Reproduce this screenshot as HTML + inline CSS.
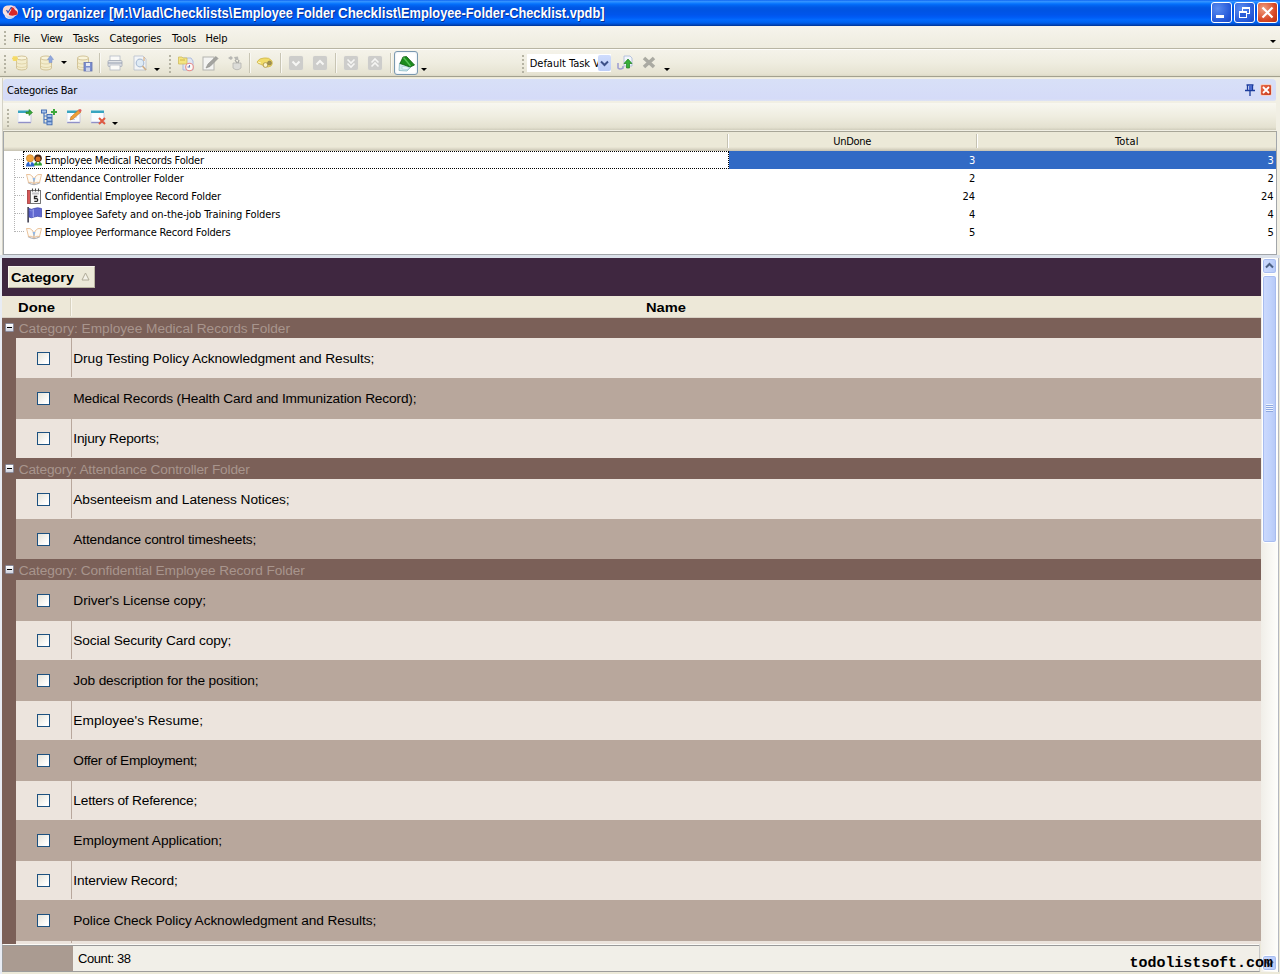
<!DOCTYPE html>
<html><head><meta charset="utf-8"><title>Vip organizer</title>
<style>
*{box-sizing:border-box;margin:0;padding:0}
html,body{width:1280px;height:974px;overflow:hidden;background:#ece9d8}
body{position:relative;font-family:"Liberation Sans",sans-serif;font-size:11px;color:#000}
.abs{position:absolute}
i{display:block;position:absolute;font-style:normal}
.t{position:absolute;white-space:pre;line-height:normal}
svg{position:absolute;overflow:visible}
/* title bar */
#title{left:0;top:0;width:1280px;height:26px;background:linear-gradient(#0058ee 0%,#3a93ff 4%,#288eff 8%,#127dff 12%,#036ffc 16%,#0262ee 22%,#0057e5 30%,#0054e3 40%,#0055eb 56%,#005bf5 66%,#026afe 76%,#0062ef 86%,#0052d6 92%,#0040ab 97%,#003092 100%)}
.wbtn{top:2px;width:21px;height:21px;border:1px solid #fff;border-radius:3px;background:radial-gradient(circle at 30% 30%,#5a8cf0,#2458d8 70%,#1c48c0)}
.wbtn.close{background:radial-gradient(circle at 30% 30%,#f0a080,#d84a28 60%,#b83010)}
/* menu */
#menu{left:0;top:26px;width:1280px;height:23px;background:linear-gradient(#f6f4ec,#eeecdf);border-bottom:1px solid #b8b5a4}
.grip{width:2px;background-image:repeating-linear-gradient(#b5b3a3 0 2px,transparent 2px 4px)}
#tb{left:0;top:49px;width:1280px;height:28px;background:linear-gradient(#fdfdfa 0,#fdfdfa 1px,#f5f3ea 1px,#efede0 50%,#e6e3d2 92%,#dcd9c6);border-bottom:1px solid #a3a18f}
.sep{width:2px;height:20px;top:53px;border-left:1px solid #c8c5b4;border-right:1px solid #f9f8f3}
.dd{width:0;height:0;border:3px solid transparent;border-top:3px solid #000;border-bottom:none}
.gb{width:14px;height:14px;top:56px;background:#cdcdcb;border-radius:2px;box-shadow:0 0 1px #dadad6}
/* cat bar */
#catpanel{left:0;top:78px;width:1280px;height:180px;background:#f1efe4;border-left:2px solid #f6f5ef;box-shadow:inset 1px 0 0 #d4d2c6}
#cathead{left:3px;top:79px;width:1273px;height:22px;background:linear-gradient(#d8e0f7,#d5dbf8 90%,#dfe3f2);border-radius:4px 4px 2px 2px}
#cattb{left:3px;top:103px;width:1273px;height:27px;background:linear-gradient(#f8f7f0,#efede0 50%,#e4e1d0 90%,#d0cdbc)}
#tree{left:3px;top:131px;width:1274px;height:124px;background:#fff;border:1px solid #a2a6aa;border-top-color:#a8a698}
#thead{left:4px;top:132px;width:1272px;height:19px;background:linear-gradient(#ece9d8 0,#ece9d8 78%,#e0dccb 86%,#d2cebd 93%,#c6c2b2 100%)}
#thead2{left:4px;top:150px;width:1272px;height:1px;background:#e6e3d4}
.tsep{top:134px;width:2px;height:14px;border-left:1px solid #c5c2b2;border-right:1px solid #fff}
.trow{position:absolute;left:4px;width:1272px;height:18px}
.trow .dots{left:11px;top:8px;width:9px;height:1px;background-image:repeating-linear-gradient(90deg,#b4b4b4 0 1px,transparent 1px 2px)}
.trow .ti{position:absolute}
#selbg{left:729px;top:151px;width:547px;height:18px;background:#316ac5}
#focus{left:23px;top:151px;width:706px;height:18px;border:1px dotted #000}
#vdots{left:14px;top:159px;width:1px;height:73px;background-image:repeating-linear-gradient(#b4b4b4 0 1px,transparent 1px 2px)}
#gap{left:0;top:255px;width:1280px;height:3px;background:#dbe1ea}
/* grid */
#lb{left:0;top:258px;width:2px;height:716px;background:#e8ecf4}
#gridbg{left:2px;top:258px;width:1259px;height:686px;background:#7b6058}
#purple{left:2px;top:258px;width:1259px;height:38px;background:#3f2740}
#catbtn{left:8px;top:266px;width:87px;height:22px;background:#ece9d8;border:1px solid #f8f6ee;border-right-color:#b8b4a0;border-bottom-color:#b8b4a0}
#ghead{left:2px;top:296px;width:1259px;height:22px;background:#ede8d8;border-bottom:1px solid #d8d0c4}
.grp{position:absolute;left:2px;width:1259px;height:20px;background:#7b6058}
.minus{left:3px;top:5px;width:9px;height:9px;background:linear-gradient(#fff,#d0d4e0);border:1px solid #8a8a9a;border-radius:1px}
.minus:after{content:"";position:absolute;left:1px;top:3px;width:5px;height:1px;background:#000}
.row{position:absolute;left:16px;width:1245px;height:40px}
.row.L{background:#ece4dd;border-top:1px solid #b8a79c}
.row.D{background:#b8a79c}
.row.L:before{content:"";position:absolute;left:55px;top:-1px;width:1px;height:100%;background:#b8a79c}
.row.L .cb{top:13px}
.row.L.first{border-top-color:#ece4dd}
.cb{left:21px;top:14px;width:13px;height:13px;border:1px solid #1c5180;background:linear-gradient(135deg,#e4e2d8,#fff 80%)}
#foot{left:2px;top:944px;width:1258px;height:28px;background:#f1efe8;border-top:1px solid #fbfaf6;border-bottom:1px solid #9c9c9c;border-left:1px solid #9c9c9c;border-right:1px solid #c8c8c8;box-shadow:inset 0 1px 0 #9a9a9a}
#footl{left:3px;top:946px;width:70px;height:25px;background:#aa9b91}
/* scrollbar */
#sb{left:1261px;top:258px;width:18px;height:714px;background:linear-gradient(90deg,#f0eee8,#fefefb);border-right:1px solid #b4b8c0}
.sbb{left:1262px;width:15px;background:linear-gradient(90deg,#cddafd,#c0d2fc 60%,#b6c8f6);border:1px solid #fff;border-radius:3px;box-shadow:inset 0 0 0 1px #a8bdf0}
</style></head><body>
<div id="title" class="abs">
<svg style="left:2px;top:4px" width="17" height="16" viewBox="0 0 17 16"><path d="M1 5 Q2 1 7 1.500 Q11 0.500 12 3 Q16 4 16 8 Q16 11 13 12 Q11 15 7 15 Q3 14.500 2.500 11 Q0 9 1 5Z" fill="#f6e4e6"/><path d="M2 4 Q4 1.500 8 2 L6 9 Q3 9 1.500 7Z" fill="#fbd8cc"/><path d="M9 3 Q10 6 8 8 Q6 10 7 11 Q11 12.500 15.500 10.500 Q16 7 13 6 Q12 3 9 3Z" fill="#d82828"/><path d="M11 2.500 Q13 2 13.500 4.500" stroke="#f0b0c0" stroke-width="1.200" fill="none"/><path d="M4 11 Q8 13.500 13 12 Q11 15 7 14.800 Q4.500 14 4 11Z" fill="#c4d4f0"/><path d="M4.500 6 L6 8.500 L9.500 3" stroke="#3450b8" stroke-width="1.200" fill="none"/></svg>
<div class="abs wbtn" style="left:1211px"><i style="left:4px;top:12px;width:8px;height:3px;background:#fff"></i></div>
<div class="abs wbtn" style="left:1234px"><i style="left:7px;top:4px;width:8px;height:7px;border:1px solid #fff;border-top-width:2px"></i><i style="left:4px;top:8px;width:8px;height:7px;border:1px solid #fff;border-top-width:2px;background:#2a5cd8"></i></div>
<div class="abs wbtn close" style="left:1257px"><svg style="left:3px;top:3px" width="13" height="13" viewBox="0 0 13 13"><path d="M1.500 1.500 L11.500 11.500 M11.500 1.500 L1.500 11.500" stroke="#fff" stroke-width="2.200"/></svg></div></div>
<div id="menu" class="abs"></div>
<i class="grip" style="left:4px;top:31px;height:14px"></i>
<i class="dd" style="left:1270px;top:40px"></i>
<div id="tb" class="abs"></div>
<i class="grip" style="left:4px;top:55px;height:18px"></i>
<svg style="left:12px;top:55px;opacity:0.8" width="16" height="16" viewBox="0 0 16 16" ><g opacity="1"><path d="M4.5 3 V13 A5.25 2 0 0 0 15 13 V3Z" fill="#f5edc9" stroke="#ccba88" stroke-width="1"/><ellipse cx="9.75" cy="3" rx="5.25" ry="2" fill="#fbf6da" stroke="#ccba88" stroke-width="1"/><path d="M4.5 7 A5.25 2 0 0 0 15 7 M4.5 10.5 A5.25 2 0 0 0 15 10.5" fill="none" stroke="#d8c890" stroke-width="0.8"/></g><path d="M0 3.500 h6 M3 1 v5 M1 1.500 l4 4 M5 1.500 l-4 4" stroke="#f6d648" stroke-width="1.300"/></svg>
<svg style="left:38px;top:55px;opacity:0.8" width="16" height="16" viewBox="0 0 16 16" ><g opacity="1"><path d="M2.5 3 V13 A5.5 2 0 0 0 13.5 13 V3Z" fill="#f5edc9" stroke="#ccba88" stroke-width="1"/><ellipse cx="8.0" cy="3" rx="5.5" ry="2" fill="#fbf6da" stroke="#ccba88" stroke-width="1"/><path d="M2.5 7 A5.5 2 0 0 0 13.5 7 M2.5 10.5 A5.5 2 0 0 0 13.5 10.5" fill="none" stroke="#d8c890" stroke-width="0.8"/></g><path d="M12.500 0.500 L15.500 4.500 H14 V7.500 H11 V4.500 H9.500Z" fill="#7896dc" stroke="#5876c4" stroke-width="0.500"/></svg>
<i class="dd" style="left:61px;top:61px"></i>
<svg style="left:76px;top:55px;opacity:0.8" width="17" height="17" viewBox="0 0 17 17" ><g opacity="1"><path d="M1.5 3 V13 A5.5 2 0 0 0 12.5 13 V3Z" fill="#f5edc9" stroke="#ccba88" stroke-width="1"/><ellipse cx="7.0" cy="3" rx="5.5" ry="2" fill="#fbf6da" stroke="#ccba88" stroke-width="1"/><path d="M1.5 7 A5.5 2 0 0 0 12.5 7 M1.5 10.5 A5.5 2 0 0 0 12.5 10.5" fill="none" stroke="#d8c890" stroke-width="0.8"/></g><rect x="8" y="7.500" width="8" height="8.500" fill="#6078cc" stroke="#4658a8" stroke-width="0.800"/><rect x="10" y="8" width="4" height="3" fill="#e8ecf8"/><rect x="10" y="12.500" width="4" height="3.500" fill="#c8d0ec"/></svg>
<i class="sep" style="left:99px"></i>
<svg style="left:107px;top:55px;opacity:0.8" width="16" height="16" viewBox="0 0 16 16" ><rect x="3" y="1" width="10" height="5" fill="#fdfdfd" stroke="#a8b0c0" stroke-width="0.800"/><rect x="1" y="5.500" width="14" height="6" rx="1" fill="#dfe3ea" stroke="#8f98ac" stroke-width="0.800"/><path d="M1 8 H15" stroke="#7f8aa4" stroke-width="1"/><rect x="3" y="10" width="10" height="5" fill="#fff" stroke="#a8b0c0" stroke-width="0.800"/></svg>
<svg style="left:132px;top:55px;opacity:0.8" width="16" height="16" viewBox="0 0 16 16" ><path d="M2 1 H11 L14 4 V15 H2Z" fill="#f4f7fc" stroke="#aab4c8" stroke-width="0.800"/><circle cx="8" cy="8" r="3.800" fill="#dcebfa" stroke="#9db4d4" stroke-width="1.200"/><path d="M10.500 11 L14 15" stroke="#c8a070" stroke-width="1.600"/><path d="M12 2 v4" stroke="#d09050" stroke-width="1"/></svg>
<i class="dd" style="left:154px;top:68px"></i>
<i class="grip" style="left:169px;top:55px;height:18px"></i>
<svg style="left:178px;top:55px;opacity:0.8" width="17" height="17" viewBox="0 0 17 17" ><path d="M5 3 H13 L15 6 V15 H5Z" fill="#dfe6f8" stroke="#8ea2d8" stroke-width="0.800"/><path d="M0.500 2 H4 L5 3 H9 V9 H0.500Z" fill="#f6e36a" stroke="#c8b040" stroke-width="0.800"/><path d="M2 5 h5" stroke="#c8a820" stroke-width="1"/><circle cx="11.500" cy="12" r="3.800" fill="#fff" stroke="#e87474" stroke-width="1.100"/><path d="M11.500 10 V12 H9.500" stroke="#5060b0" stroke-width="1.100" fill="none"/></svg>
<svg style="left:202px;top:55px;opacity:1" width="17" height="17" viewBox="0 0 17 17" ><rect x="1" y="2" width="11" height="13" fill="#f4f4f2" stroke="#b4b4b0" stroke-width="1"/><path d="M4 13 L6 9 L14 1.500 L16 3.500 L8 11.500Z" fill="#a4a4a0" stroke="#8c8c88" stroke-width="0.600"/></svg>
<svg style="left:226px;top:55px;opacity:1" width="17" height="17" viewBox="0 0 17 17" ><path d="M2 3 L5 1 L7 3 L5 5Z M8 2 L12 1.500 L12.500 5 L9.500 5Z" fill="#b8b8b4"/><path d="M7 8 H15 V13 Q11 16.500 7 13Z" fill="#dcdcd8" stroke="#b4b4b0" stroke-width="0.800"/><path d="M9 5 L11 8 M13 5 L12 8" stroke="#a8a8a4" stroke-width="1.300"/></svg>
<i class="sep" style="left:249px"></i>
<svg style="left:256px;top:55px;opacity:0.8" width="18" height="16" viewBox="0 0 18 16" ><path d="M1 7 Q3 3 8 3 Q13 2 16 6 Q17 9 15 11 Q12 13 9 11 Q6 10 4 9 Q2 9 1 7Z" fill="#f2d84a" stroke="#c8a828" stroke-width="0.800"/><circle cx="9.500" cy="10" r="2.400" fill="#fdf6c8" stroke="#a88c28" stroke-width="1"/><circle cx="13.500" cy="8" r="2" fill="#8c7a30" stroke="#6c5c20" stroke-width="0.600"/><path d="M2 7 L5 8" stroke="#fff8c0" stroke-width="1"/></svg>
<i class="sep" style="left:280px"></i>
<i class="gb" style="left:289px"><svg style="left:0px;top:0px;opacity:1" width="14" height="14" viewBox="0 0 14 14" ><path d="M3.500 5.500 L7 9 L10.500 5.500" stroke="#f6f6f4" stroke-width="2" fill="none"/></svg></i>
<i class="gb" style="left:313px"><svg style="left:0px;top:0px;opacity:1" width="14" height="14" viewBox="0 0 14 14" ><path d="M3.500 8.500 L7 5 L10.500 8.500" stroke="#f6f6f4" stroke-width="2" fill="none"/></svg></i>
<i class="gb" style="left:344px"><svg style="left:0px;top:0px;opacity:1" width="14" height="14" viewBox="0 0 14 14" ><path d="M3.500 3.500 L7 7 L10.500 3.500 M3.500 7.500 L7 11 L10.500 7.500" stroke="#f6f6f4" stroke-width="1.600" fill="none"/></svg></i>
<i class="gb" style="left:368px"><svg style="left:0px;top:0px;opacity:1" width="14" height="14" viewBox="0 0 14 14" ><path d="M3.500 6.500 L7 3 L10.500 6.500 M3.500 10.500 L7 7 L10.500 10.500" stroke="#f6f6f4" stroke-width="1.600" fill="none"/></svg></i>
<i class="sep" style="left:335px"></i>
<i class="sep" style="left:390px"></i>
<i style="left:394px;top:51px;width:24px;height:24px;background:#fff;border:1px solid #7a98af;border-radius:3px;box-shadow:inset 0 0 2px #c8d8e8"></i>
<svg style="left:398px;top:55px;opacity:1" width="17" height="17" viewBox="0 0 17 17" ><path d="M1.500 8 L1 15.500 L9 16 L13 12 L12 9Z" fill="#d4ecf0" stroke="#86b8c4" stroke-width="0.800"/><path d="M4 11.500 L10.500 12 L10 14.500 L4 14Z" fill="#f2fafc" stroke="#9cc8d4" stroke-width="0.600"/><path d="M2 8.500 L5 2 L8.500 1.500 L16.500 10 L12 12Z" fill="#1c8c1c" stroke="#0c5c0c" stroke-width="0.800"/><path d="M5.500 2.500 L12.500 11" stroke="#58c458" stroke-width="1.300"/></svg>
<i class="dd" style="left:421px;top:68px"></i>
<i class="grip" style="left:522px;top:55px;height:18px"></i>
<i style="left:527px;top:54px;width:84px;height:18px;background:#fff"></i>
<i style="left:598px;top:55px;width:13px;height:16px;background:linear-gradient(#cfdcfd,#bccdf8);border-radius:2px"><svg style="left:2px;top:5px;opacity:1" width="9" height="7" viewBox="0 0 9 7" ><path d="M1 1.500 L4.500 5 L8 1.500" stroke="#3c5088" stroke-width="2" fill="none"/></svg></i>
<svg style="left:617px;top:55px;opacity:1" width="17" height="17" viewBox="0 0 17 17" ><path d="M7 1 H13 L15 3 V11 H7Z" fill="#f2f6fc" stroke="#a8b8d8" stroke-width="0.800"/><path d="M1 8 V13 Q3 15 6 13 V11" fill="none" stroke="#a0a0d0" stroke-width="1.600"/><path d="M11 4 L15 8.500 H12.500 V13 H9.500 V8.500 H7Z" fill="#38b038" stroke="#1c801c" stroke-width="0.700"/></svg>
<svg style="left:642px;top:56px;opacity:1" width="14" height="13" viewBox="0 0 14 13" ><path d="M2 2 L12 11 M12 2 L2 11" stroke="#aaaaa2" stroke-width="3.600" stroke-linecap="butt"/></svg>
<i class="dd" style="left:664px;top:68px"></i>
<div id="catpanel" class="abs"></div>
<div id="cathead" class="abs"></div>
<svg style="left:1244px;top:84px" width="12" height="12" viewBox="0 0 12 12"><path d="M2.500 1 h7 M3.500 1 v5 M8.500 1 v5 M1 6.500 h10 M6 7 v5" stroke="#1c3c9c" stroke-width="1.300" fill="none"/><rect x="5" y="1.500" width="3" height="4.500" fill="#4a6ad0"/></svg>
<div class="abs" style="left:1260px;top:84px;width:12px;height:12px;background:linear-gradient(135deg,#e86a48,#c83a1c);border-radius:2px;border:1px solid #f0d0c8"><svg style="left:1px;top:1px" width="8" height="8" viewBox="0 0 8 8"><path d="M1 1 L7 7 M7 1 L1 7" stroke="#fff" stroke-width="1.800"/></svg></div>
<div id="cattb" class="abs"></div>
<i class="grip" style="left:7px;top:109px;height:18px"></i>
<svg style="left:17px;top:109px;opacity:1" width="16" height="16" viewBox="0 0 16 16" ><rect x="1" y="1.500" width="13" height="12" fill="#fbfcfe" stroke="none"/><rect x="1" y="1.500" width="13" height="2.500" fill="#38a4c0"/><path d="M1 13.500 H14" stroke="#9090c8" stroke-width="1.400"/><path d="M14 4 V13.500" stroke="#c8c8e0" stroke-width="1"/><path d="M1 4 V13.500" stroke="#e0e4f0" stroke-width="1"/><path d="M9 3 H12 V0.500 L15.500 3.500 L12 6.500 V4.500 H9Z" fill="#3ca83c" stroke="#1c7c1c" stroke-width="0.600"/></svg>
<svg style="left:41px;top:109px;opacity:1" width="17" height="17" viewBox="0 0 17 17" ><path d="M3 4 V14 H6 M3 7 H6 M3 10.500 H6" stroke="#4a78c0" stroke-width="1.200" fill="none"/><rect x="0.500" y="1" width="5" height="3" fill="#a8c4ec" stroke="#3c68b0" stroke-width="0.900"/><rect x="6" y="5.500" width="5" height="3" fill="#a8c4ec" stroke="#3c68b0" stroke-width="0.900"/><rect x="6" y="9.200" width="5" height="3" fill="#a8c4ec" stroke="#3c68b0" stroke-width="0.900"/><rect x="6" y="12.800" width="5" height="3" fill="#a8c4ec" stroke="#3c68b0" stroke-width="0.900"/><path d="M10 3 H16 M13 0 V6" stroke="#3ca83c" stroke-width="2"/></svg>
<svg style="left:66px;top:109px;opacity:1" width="16" height="16" viewBox="0 0 16 16" ><rect x="1" y="1.500" width="13" height="12" fill="#fbfcfe" stroke="none"/><rect x="1" y="1.500" width="13" height="2.500" fill="#38a4c0"/><path d="M1 13.500 H14" stroke="#9090c8" stroke-width="1.400"/><path d="M14 4 V13.500" stroke="#c8c8e0" stroke-width="1"/><path d="M1 4 V13.500" stroke="#e0e4f0" stroke-width="1"/><path d="M4 8 H11 M4 10.500 H9" stroke="#b8c0d8" stroke-width="0.800"/><path d="M4 11 L5 8 L12.500 1 L15 3 L7 10Z" fill="#f0a038" stroke="#c07018" stroke-width="0.600"/><circle cx="14" cy="1.500" r="1.500" fill="#e06060"/></svg>
<svg style="left:90px;top:109px;opacity:1" width="16" height="16" viewBox="0 0 16 16" ><rect x="1" y="1.500" width="13" height="12" fill="#fbfcfe" stroke="none"/><rect x="1" y="1.500" width="13" height="2.500" fill="#38a4c0"/><path d="M1 13.500 H14" stroke="#9090c8" stroke-width="1.400"/><path d="M14 4 V13.500" stroke="#c8c8e0" stroke-width="1"/><path d="M1 4 V13.500" stroke="#e0e4f0" stroke-width="1"/><path d="M9 9 L15 15 M15 9 L9 15" stroke="#e05a40" stroke-width="2"/></svg>
<i class="dd" style="left:112px;top:122px"></i>
<div id="tree" class="abs"></div>
<div id="thead" class="abs"></div>
<i class="tsep" style="left:727px"></i><i class="tsep" style="left:976px"></i>
<div id="selbg" class="abs"></div>
<i id="vdots"></i>
<div class="trow" style="top:151px"><i class="dots"></i><svg class="ti" style="left:22px;top:2.5px" width="16" height="13" viewBox="0 0 16 13"><path d="M0 12.500 Q0 7.800 4 7.800 Q8.500 7.800 8.500 12.500Z" fill="#2c64cc"/><path d="M2.800 8 L4.200 11.500 L5.600 8Z" fill="#e8f0ff"/><circle cx="4" cy="4.300" r="3.600" fill="#f4a63c" stroke="#c88428" stroke-width="0.700"/><path d="M8 11.500 Q8 7.800 12 7.800 Q16 7.800 16 11.500Z" fill="#2c9c30"/><path d="M10.800 8 L12 10.500 L13.200 8Z" fill="#e8ffe8"/><circle cx="12" cy="4.200" r="3.800" fill="#40200f"/><circle cx="12" cy="5" r="2.500" fill="#d06a20"/></svg></div>
<div class="trow" style="top:169px"><i class="dots"></i><svg class="ti" style="left:22px;top:3.500px" width="16" height="12" viewBox="0 0 16 12"><path d="M2 9.500 Q8 13.500 14 9.500" stroke="#b4b4b8" fill="none" stroke-width="1.400"/><path d="M0.500 1.500 Q4.500 0.500 7 4 L8 10.500 Q5 8.500 2.500 9.500Z" fill="#fefbf5" stroke="#e4b484" stroke-width="0.800"/><path d="M15.500 1.500 Q11.500 0.500 9 4 L8 10.500 Q11 8.500 13.500 9.500Z" fill="#fefbf5" stroke="#e4b484" stroke-width="0.800"/><path d="M6.600 4.500 L8 10 L9.400 4.500 Q8 5.500 6.600 4.500Z" fill="#8cb8ea"/></svg></div>
<div class="trow" style="top:187px"><i class="dots"></i><svg class="ti" style="left:23px;top:1px" width="15" height="17" viewBox="0 0 15 17"><rect x="0.500" y="2.500" width="3" height="13" fill="#d45858" stroke="#a43838" stroke-width="0.800"/><rect x="3.500" y="2.500" width="10" height="13" fill="#fafafa" stroke="#686868" stroke-width="0.900"/><rect x="5" y="4.500" width="7" height="2" fill="#c4c4c8"/><path d="M5.500 0.500 v3 M8.500 0.500 v3 M11.500 0.500 v3" stroke="#484848" stroke-width="1.100"/><path d="M10.300 8.500 H7.500 V10.600 H9.800 Q10.600 10.600 10.600 11.600 V12.300 Q10.600 13.300 9.800 13.300 H7.300" stroke="#282828" fill="none" stroke-width="1.300"/></svg></div>
<div class="trow" style="top:205px"><i class="dots"></i><svg class="ti" style="left:23px;top:1.500px" width="16" height="16" viewBox="0 0 16 16"><rect x="0.300" y="0" width="1.700" height="15.500" fill="#4c4c5c"/><path d="M2 1.500 Q4.500 3 7 1.500 Q10.500 0 14.500 1.500 V10 Q10.500 8.500 7 10 Q4.500 11.500 2 10Z" fill="#6068d0" stroke="#3840a8" stroke-width="0.700"/><path d="M6.300 2.200 V10.200" stroke="#9aa2ec" stroke-width="1.300"/><path d="M2.500 3.300 Q4.500 4.300 6 3.500" stroke="#8890e0" stroke-width="0.800" fill="none"/></svg></div>
<div class="trow" style="top:223px"><i class="dots"></i><svg class="ti" style="left:22px;top:3.500px" width="16" height="12" viewBox="0 0 16 12"><path d="M2 9.500 Q8 13.500 14 9.500" stroke="#b4b4b8" fill="none" stroke-width="1.400"/><path d="M0.500 1.500 Q4.500 0.500 7 4 L8 10.500 Q5 8.500 2.500 9.500Z" fill="#fefbf5" stroke="#e4b484" stroke-width="0.800"/><path d="M15.500 1.500 Q11.500 0.500 9 4 L8 10.500 Q11 8.500 13.500 9.500Z" fill="#fefbf5" stroke="#e4b484" stroke-width="0.800"/><path d="M6.600 4.500 L8 10 L9.400 4.500 Q8 5.500 6.600 4.500Z" fill="#8cb8ea"/></svg></div>
<div id="focus" class="abs"></div>
<div id="gap" class="abs"></div>
<div id="lb" class="abs"></div>
<div id="gridbg" class="abs"></div>
<div id="purple" class="abs"></div>
<div id="catbtn" class="abs"><svg style="left:72px;top:5px" width="9" height="9" viewBox="0 0 9 9"><path d="M4.500 1 L8 8 H1 Z" fill="#f4f2e8" stroke="#b0ac98" stroke-width="1"/></svg></div>
<div id="ghead" class="abs"><i style="left:68px;top:2px;width:2px;height:18px;border-left:1px solid #d8d2c0;border-right:1px solid #f8f6ee"></i></div>
<div class="grp" style="top:318px"><i class="minus"></i></div>
<div class="row L first" style="top:338px"><i class="cb"></i></div>
<div class="row D" style="top:378px"><i class="cb"></i></div>
<div class="row L" style="top:418px"><i class="cb"></i></div>
<div class="grp" style="top:459px"><i class="minus"></i></div>
<div class="row L first" style="top:479px"><i class="cb"></i></div>
<div class="row D" style="top:519px"><i class="cb"></i></div>
<div class="grp" style="top:560px"><i class="minus"></i></div>
<div class="row D first" style="top:580px"><i class="cb"></i></div>
<div class="row L" style="top:620px"><i class="cb"></i></div>
<div class="row D" style="top:660px"><i class="cb"></i></div>
<div class="row L" style="top:700px"><i class="cb"></i></div>
<div class="row D" style="top:740px"><i class="cb"></i></div>
<div class="row L" style="top:780px"><i class="cb"></i></div>
<div class="row D" style="top:820px"><i class="cb"></i></div>
<div class="row L" style="top:860px"><i class="cb"></i></div>
<div class="row D" style="top:900px"><i class="cb"></i></div>
<div class="row L" style="top:940px;height:4px"></div>
<div id="foot" class="abs"></div><div id="footl" class="abs"></div>
<div id="sb" class="abs"></div>
<div class="abs sbb" style="top:258px;height:16px"><svg style="left:2px;top:3px" width="9" height="7" viewBox="0 0 9 7"><path d="M1 5.500 L4.500 2 L8 5.500" stroke="#4d6185" stroke-width="2" fill="none"/></svg></div>
<div class="abs sbb" style="top:275px;height:268px"><i style="left:3px;top:128px;width:7px;height:8px;background-image:repeating-linear-gradient(#eef4fe 0 1px,#8ea8e0 1px 2px)"></i></div>
<div class="abs sbb" style="top:955px;height:16px"><svg style="left:2px;top:4px" width="9" height="7" viewBox="0 0 9 7"><path d="M1 1.500 L4.500 5 L8 1.500" stroke="#4d6185" stroke-width="2" fill="none"/></svg></div>
<span class="t" style="left:22.00px;top:5px;font:bold 14px 'Liberation Sans',sans-serif;letter-spacing:0.000px;color:#fff;text-shadow:1px 1px 0 #0a3090;transform:scaleX(0.9423);transform-origin:0 0;">Vip organizer </span>
<span class="t" style="left:109.00px;top:5px;font:bold 14px 'Liberation Sans',sans-serif;letter-spacing:0.000px;color:#fff;text-shadow:1px 1px 0 #0a3090;transform:scaleX(0.9337);transform-origin:0 0;">[M:\Vlad\Checklists\</span>
<span class="t" style="left:232.50px;top:5px;font:bold 14px 'Liberation Sans',sans-serif;letter-spacing:0.000px;color:#fff;text-shadow:1px 1px 0 #0a3090;transform:scaleX(0.9040);transform-origin:0 0;">Employee Folder </span>
<span class="t" style="left:338.00px;top:5px;font:bold 14px 'Liberation Sans',sans-serif;letter-spacing:0.000px;color:#fff;text-shadow:1px 1px 0 #0a3090;transform:scaleX(0.9525);transform-origin:0 0;">Checklist\</span>
<span class="t" style="left:401.00px;top:5px;font:bold 14px 'Liberation Sans',sans-serif;letter-spacing:0.000px;color:#fff;text-shadow:1px 1px 0 #0a3090;transform:scaleX(0.9147);transform-origin:0 0;">Employee-Folder-Checklist.vpdb]</span>
<span class="t" style="left:13.50px;top:32px;font:normal 11px 'DejaVu Sans Condensed','Liberation Sans',sans-serif;letter-spacing:0.066px;color:#000;">File</span>
<span class="t" style="left:40.75px;top:32px;font:normal 11px 'DejaVu Sans Condensed','Liberation Sans',sans-serif;letter-spacing:-0.430px;color:#000;">View</span>
<span class="t" style="left:73.00px;top:32px;font:normal 11px 'DejaVu Sans Condensed','Liberation Sans',sans-serif;letter-spacing:-0.019px;color:#000;">Tasks</span>
<span class="t" style="left:109.50px;top:32px;font:normal 11px 'DejaVu Sans Condensed','Liberation Sans',sans-serif;letter-spacing:-0.161px;color:#000;">Categories</span>
<span class="t" style="left:172.00px;top:32px;font:normal 11px 'DejaVu Sans Condensed','Liberation Sans',sans-serif;letter-spacing:0.013px;color:#000;">Tools</span>
<span class="t" style="left:205.50px;top:32px;font:normal 11px 'DejaVu Sans Condensed','Liberation Sans',sans-serif;letter-spacing:-0.207px;color:#000;">Help</span>
<span class="t" style="left:7.00px;top:84px;font:normal 11px 'DejaVu Sans Condensed','Liberation Sans',sans-serif;letter-spacing:-0.244px;color:#000;">Categories Bar</span>
<span class="t" style="left:833.30px;top:135px;font:normal 11px 'DejaVu Sans Condensed','Liberation Sans',sans-serif;letter-spacing:-0.310px;color:#000;">UnDone</span>
<span class="t" style="left:1115.00px;top:135px;font:normal 11px 'DejaVu Sans Condensed','Liberation Sans',sans-serif;letter-spacing:0.136px;color:#000;">Total</span>
<span class="t" style="left:44.70px;top:154px;font:normal 11px 'DejaVu Sans Condensed','Liberation Sans',sans-serif;letter-spacing:-0.229px;color:#000;">Employee Medical Records Folder</span>
<span class="t" style="left:969.00px;top:154px;font:normal 11px 'DejaVu Sans Condensed','Liberation Sans',sans-serif;letter-spacing:-0.297px;color:#fff;">3</span>
<span class="t" style="left:1267.50px;top:154px;font:normal 11px 'DejaVu Sans Condensed','Liberation Sans',sans-serif;letter-spacing:-0.297px;color:#fff;">3</span>
<span class="t" style="left:44.70px;top:172px;font:normal 11px 'DejaVu Sans Condensed','Liberation Sans',sans-serif;letter-spacing:-0.123px;color:#000;">Attendance Controller Folder</span>
<span class="t" style="left:969.00px;top:172px;font:normal 11px 'DejaVu Sans Condensed','Liberation Sans',sans-serif;letter-spacing:-0.297px;color:#000;">2</span>
<span class="t" style="left:1267.50px;top:172px;font:normal 11px 'DejaVu Sans Condensed','Liberation Sans',sans-serif;letter-spacing:-0.297px;color:#000;">2</span>
<span class="t" style="left:44.70px;top:190px;font:normal 11px 'DejaVu Sans Condensed','Liberation Sans',sans-serif;letter-spacing:-0.188px;color:#000;">Confidential Employee Record Folder</span>
<span class="t" style="left:962.50px;top:190px;font:normal 11px 'DejaVu Sans Condensed','Liberation Sans',sans-serif;letter-spacing:-0.047px;color:#000;">24</span>
<span class="t" style="left:1261.00px;top:190px;font:normal 11px 'DejaVu Sans Condensed','Liberation Sans',sans-serif;letter-spacing:-0.047px;color:#000;">24</span>
<span class="t" style="left:44.70px;top:208px;font:normal 11px 'DejaVu Sans Condensed','Liberation Sans',sans-serif;letter-spacing:-0.102px;color:#000;">Employee Safety and on-the-job Training Folders</span>
<span class="t" style="left:969.00px;top:208px;font:normal 11px 'DejaVu Sans Condensed','Liberation Sans',sans-serif;letter-spacing:-0.297px;color:#000;">4</span>
<span class="t" style="left:1267.50px;top:208px;font:normal 11px 'DejaVu Sans Condensed','Liberation Sans',sans-serif;letter-spacing:-0.297px;color:#000;">4</span>
<span class="t" style="left:44.70px;top:226px;font:normal 11px 'DejaVu Sans Condensed','Liberation Sans',sans-serif;letter-spacing:-0.146px;color:#000;">Employee Performance Record Folders</span>
<span class="t" style="left:969.00px;top:226px;font:normal 11px 'DejaVu Sans Condensed','Liberation Sans',sans-serif;letter-spacing:-0.297px;color:#000;">5</span>
<span class="t" style="left:1267.50px;top:226px;font:normal 11px 'DejaVu Sans Condensed','Liberation Sans',sans-serif;letter-spacing:-0.297px;color:#000;">5</span>
<span class="t" style="left:529.70px;top:57px;font:normal 11px 'DejaVu Sans Condensed','Liberation Sans',sans-serif;letter-spacing:-0.006px;color:#000;clip-path:inset(0 2px 0 0);">Default Task V</span>
<span class="t" style="left:11.00px;top:270px;font:bold 13px 'Liberation Sans',sans-serif;letter-spacing:0.000px;color:#000;transform:scaleX(1.1178);transform-origin:0 0;">Category</span>
<span class="t" style="left:18.00px;top:300px;font:bold 13px 'Liberation Sans',sans-serif;letter-spacing:0.000px;color:#000;transform:scaleX(1.1385);transform-origin:0 0;">Done</span>
<span class="t" style="left:646.00px;top:300px;font:bold 13px 'Liberation Sans',sans-serif;letter-spacing:0.000px;color:#000;transform:scaleX(1.1292);transform-origin:0 0;">Name</span>
<span class="t" style="left:78.00px;top:951px;font:normal 13px 'Liberation Sans',sans-serif;letter-spacing:-0.419px;color:#000;">Count: 38</span>
<span class="t" style="left:1129.60px;top:955px;font:bold 15px 'Liberation Mono',monospace;letter-spacing:-0.052px;color:#000;">todolistsoft.com</span>
<span class="t" style="left:18.70px;top:321px;font:normal 13.7px 'Liberation Sans',sans-serif;letter-spacing:-0.026px;color:#a8958d;">Category: Employee Medical Records Folder</span>
<span class="t" style="left:73.30px;top:351px;font:normal 13.7px 'Liberation Sans',sans-serif;letter-spacing:-0.068px;color:#000;">Drug Testing Policy Acknowledgment and Results;</span>
<span class="t" style="left:73.30px;top:391px;font:normal 13.7px 'Liberation Sans',sans-serif;letter-spacing:-0.155px;color:#000;">Medical Records (Health Card and Immunization Record);</span>
<span class="t" style="left:73.30px;top:431px;font:normal 13.7px 'Liberation Sans',sans-serif;letter-spacing:-0.208px;color:#000;">Injury Reports;</span>
<span class="t" style="left:18.70px;top:462px;font:normal 13.7px 'Liberation Sans',sans-serif;letter-spacing:-0.168px;color:#a8958d;">Category: Attendance Controller Folder</span>
<span class="t" style="left:73.30px;top:492px;font:normal 13.7px 'Liberation Sans',sans-serif;letter-spacing:-0.064px;color:#000;">Absenteeism and Lateness Notices;</span>
<span class="t" style="left:73.30px;top:532px;font:normal 13.7px 'Liberation Sans',sans-serif;letter-spacing:-0.171px;color:#000;">Attendance control timesheets;</span>
<span class="t" style="left:18.70px;top:563px;font:normal 13.7px 'Liberation Sans',sans-serif;letter-spacing:-0.103px;color:#a8958d;">Category: Confidential Employee Record Folder</span>
<span class="t" style="left:73.30px;top:593px;font:normal 13.7px 'Liberation Sans',sans-serif;letter-spacing:-0.030px;color:#000;">Driver's License copy;</span>
<span class="t" style="left:73.30px;top:633px;font:normal 13.7px 'Liberation Sans',sans-serif;letter-spacing:-0.104px;color:#000;">Social Security Card copy;</span>
<span class="t" style="left:73.30px;top:673px;font:normal 13.7px 'Liberation Sans',sans-serif;letter-spacing:-0.135px;color:#000;">Job description for the position;</span>
<span class="t" style="left:73.30px;top:713px;font:normal 13.7px 'Liberation Sans',sans-serif;letter-spacing:0.044px;color:#000;">Employee's Resume;</span>
<span class="t" style="left:73.30px;top:753px;font:normal 13.7px 'Liberation Sans',sans-serif;letter-spacing:-0.266px;color:#000;">Offer of Employment;</span>
<span class="t" style="left:73.30px;top:793px;font:normal 13.7px 'Liberation Sans',sans-serif;letter-spacing:-0.194px;color:#000;">Letters of Reference;</span>
<span class="t" style="left:73.30px;top:833px;font:normal 13.7px 'Liberation Sans',sans-serif;letter-spacing:-0.050px;color:#000;">Employment Application;</span>
<span class="t" style="left:73.30px;top:873px;font:normal 13.7px 'Liberation Sans',sans-serif;letter-spacing:-0.124px;color:#000;">Interview Record;</span>
<span class="t" style="left:73.30px;top:913px;font:normal 13.7px 'Liberation Sans',sans-serif;letter-spacing:-0.097px;color:#000;">Police Check Policy Acknowledgment and Results;</span>
</body></html>
